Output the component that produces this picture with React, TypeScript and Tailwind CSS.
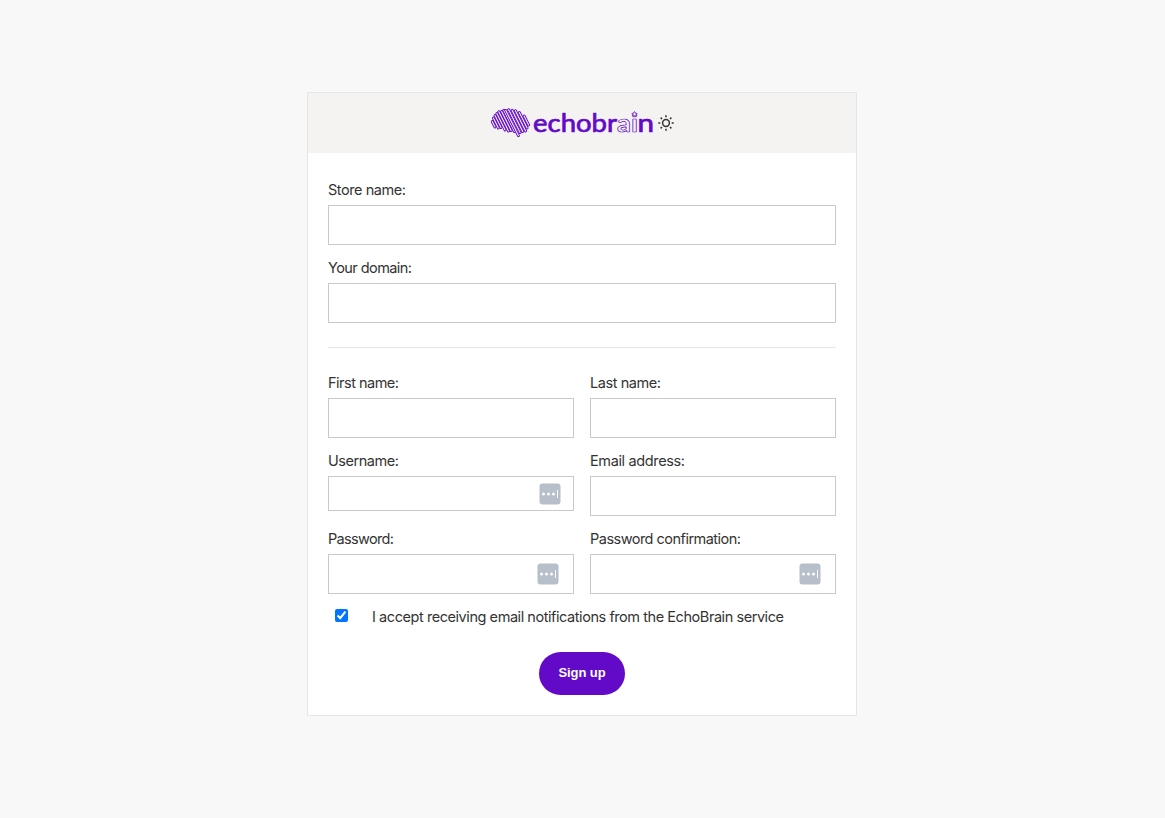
import React from "react";

// Each fold: horizontal offset of its slanted line, then its top and bottom y.
const folds: [number, number, number][] = [
  [-4.5, 15.5, 21],
  [-1.6, 12, 22],
  [1.3, 9.5, 21.5],
  [4.1, 7.5, 24],
  [7, 5.7, 25],
  [9.9, 5.5, 24.5],
  [12.7, 4.2, 25.5],
  [14.6, 4.4, 29.6],
  [17.8, 3.7, 26.5],
  [21, 4.2, 25.5],
  [24.1, 4.7, 25],
  [27.1, 6.5, 22],
  [30.1, 10, 19],
];

function Brain() {
  return (
    <svg width="44" height="34" viewBox="0 0 44 34" fill="none" strokeLinecap="round" className="-mr-px shrink-0">
      {folds.map(([u, top, bottom]) => {
        const d = `M${u + top / 2} ${top}L${u + bottom / 2} ${bottom}`;
        return (
          <g key={u}>
            <path d={d} stroke="#620ac8" strokeWidth="2.9" />
            <path d={d} stroke="#f4f3f2" strokeWidth="1.1" />
          </g>
        );
      })}
    </svg>
  );
}

function Logo() {
  return (
    <div className="flex h-[60px] items-center justify-center bg-[#f4f3f2]">
      <div className="flex w-[186px] items-center">
        <Brain />
        <svg width="124" height="34" viewBox="0 0 124 34" className="shrink-0 overflow-visible">
          <g fill="#620ac8" stroke="#620ac8" strokeWidth=".7" strokeLinejoin="round" className="font-['Lato'] text-[25px]">
            <text x="1" y="26.2" textLength="84" lengthAdjust="spacingAndGlyphs">echobr</text>
            <text x="85" y="26.2" textLength="21" lengthAdjust="spacingAndGlyphs" fill="#f4f3f2" strokeWidth=".7" className="font-bold">ai</text>
            <text x="105.5" y="26.2" textLength="16.5" lengthAdjust="spacingAndGlyphs">n</text>
          </g>
          <path d="M102.500 5.500l.8 1.700 1.800.2-1.300 1.300.3 1.800-1.600-.9-1.600.9.3-1.800-1.300-1.300 1.800-.2z" fill="#f4f3f2" stroke="#620ac8" strokeWidth=".7" />
        </svg>
        <svg width="16" height="16" viewBox="0 0 16 16" fill="none" stroke="#333" strokeWidth="1.5" className="ml-[2px] shrink-0">
          <circle cx="8" cy="8" r="3.4" />
          <path d="M8 .3v2M8 13.7v2M.3 8h2M13.7 8h2M2.6 2.6L4 4M12 12l1.4 1.4M2.6 13.4L4 12M12 4l1.4-1.4" />
        </svg>
      </div>
    </div>
  );
}

function KeyIcon() {
  return (
    <svg width="22" height="22" viewBox="0 0 22 22" className="shrink-0">
      <rect x=".5" y=".5" width="21" height="21" rx="3" fill="#b7bfca" />
      <circle cx="4.5" cy="11" r="1.5" fill="#fff" />
      <circle cx="9.5" cy="11" r="1.5" fill="#fff" />
      <circle cx="14.5" cy="11" r="1.5" fill="#fff" />
      <path d="M18.5 7v8" stroke="#fff" />
    </svg>
  );
}

interface FieldProps {
  label: string;
  width: string;
  type?: string;
  box?: string;
  icon?: boolean;
}

function Field({ label, width, type = "text", box = "h-10 pr-[14px]", icon = false }: FieldProps) {
  return (
    <label className="block h-[78px]">
      <span className="flex h-[30px] items-center">
        <svg height="24" className={`overflow-visible ${width}`}>
          <text x="0" y="17" textLength="100%" fill="#333">{label}</text>
        </svg>
      </span>
      <span className={`flex items-center border border-[#c9c9c9] bg-white ${box}`}>
        <input type={type} aria-label={label} className="h-full min-w-0 flex-1 bg-transparent px-3 outline-none" />
        {icon && <KeyIcon />}
      </span>
    </label>
  );
}

export default function App() {
  return (
    <main className="h-[818px] bg-[#f8f8f8] pt-[92px] font-['Inter',sans-serif] text-[14.5px] text-[#333]">
      <form className="ml-[307px] h-[624px] w-[550px] border border-[#e6e6e6] bg-white" onSubmit={(e) => e.preventDefault()}>
        <Logo />
        <div className="px-5 pt-[22px]">
          <Field label="Store name:" width="w-[78px]" />
          <Field label="Your domain:" width="w-[84px]" />
          <hr className="mt-[16px] mb-[20px] border-[#e6e6e6]" />
          <div className="grid grid-cols-2 gap-x-4">
            <Field label="First name:" width="w-[71px]" />
            <Field label="Last name:" width="w-[71px]" />
            <Field label="Username:" width="w-[71px]" box="h-[35px] pr-[12px]" icon />
            <Field label="Email address:" width="w-[95px]" />
            <Field label="Password:" width="w-[66px]" type="password" icon />
            <Field label="Password confirmation:" width="w-[151px]" type="password" icon />
          </div>
          <label className="mt-[3px] flex h-[24px] items-center pl-[7px]">
            <input type="checkbox" defaultChecked className="mb-[3px] h-[13px] w-[13px]" />
            <svg height="24" className="ml-[24px] w-[412px] overflow-visible">
              <text x="0" y="17" textLength="100%" fill="#333">I accept receiving email notifications from the EchoBrain service</text>
            </svg>
          </label>
          <div className="mt-[23px] flex justify-center">
            <button className="h-[43px] w-[86px] rounded-full bg-[#620ac8] pb-[2px] font-['Liberation_Sans',sans-serif] text-[13px] font-bold tracking-[-0.1px] text-white">Sign up</button>
          </div>
        </div>
      </form>
    </main>
  );
}
